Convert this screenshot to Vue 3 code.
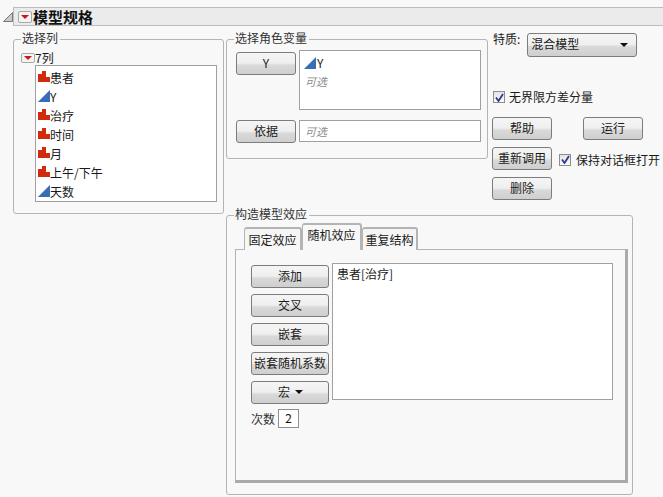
<script setup>
const columns = [
  { name: '患者', type: 'n' },
  { name: 'Y', type: 'c' },
  { name: '治疗', type: 'n' },
  { name: '时间', type: 'n' },
  { name: '月', type: 'n' },
  { name: '上午/下午', type: 'n' },
  { name: '天数', type: 'c' }
]
const tabs = [
  { name: '固定效应', cls: 'w58' },
  { name: '随机效应', cls: 'w60 active' },
  { name: '重复结构', cls: 'w56' }
]
const effects = ['添加', '交叉', '嵌套', '嵌套随机系数']
</script>

<template>
  <div class="page">
    <div class="head-row">
      <svg class="tri" width="10" height="10" viewBox="0 0 10 10">
        <path d="M0.5 9.5 L9.5 0.5 V9.5 Z" fill="#c9c9c9" stroke="#777" stroke-width="1" />
      </svg>
      <div class="head">
        <span class="menu big"><i></i></span>
        <span class="title">模型规格</span>
      </div>
    </div>

    <div class="content">
      <div class="group cols">
        <span class="legend">选择列</span>
        <div class="count"><span class="menu small"><i></i></span><span class="count-label">7列</span></div>
        <ul class="collist">
          <li v-for="c in columns" :key="c.name">
            <svg v-if="c.type === 'n'" class="ico" width="12" height="12" viewBox="0 0 12 12">
              <path d="M0 3h4v8H0zM4 0h4v11H4zM8 6h4v5H8z" fill="#d42a0c" />
              <path d="M3.800 4v7M7.800 7v4" stroke="#b8381f" stroke-width="0.5" />
            </svg>
            <svg v-else class="ico" width="12" height="12" viewBox="0 0 12 12">
              <path d="M0 12 L12 0 V12 Z" fill="#3a6db8" />
              <path d="M0 12 L12 0" stroke="#7fa0d0" stroke-width="0.7" />
            </svg>
            <span class="col-name">{{ c.name }}</span>
          </li>
        </ul>
      </div>

      <div class="main">
        <div class="top">
          <div class="group roles">
            <span class="legend">选择角色变量</span>
            <div class="role-row first">
              <button class="btn role-btn">Y</button>
              <div class="box tall">
                <div class="role-item">
                  <svg class="ico" width="12" height="12" viewBox="0 0 12 12">
                    <path d="M0 12 L12 0 V12 Z" fill="#3a6db8" />
                  </svg>
                  <span>Y</span>
                </div>
                <div class="opt">可选</div>
              </div>
            </div>
            <div class="role-row second">
              <button class="btn role-btn">依据</button>
              <div class="box short"><div class="opt">可选</div></div>
            </div>
          </div>

          <div class="side">
            <div class="trait">
              <span>特质:</span>
              <div class="select btn-bg"><span>混合模型</span><i class="caret"></i></div>
            </div>
            <label class="check unbounded"><span class="cb"><svg width="9" height="9" viewBox="0 0 9 9"><path d="M1 4.500 L3.500 8 L8 1" fill="none" stroke="#2f3a8f" stroke-width="1.800" /></svg></span>无界限方差分量</label>
            <div class="side-row r1">
              <button class="btn side-btn">帮助</button>
              <button class="btn side-btn run">运行</button>
            </div>
            <div class="side-row r2">
              <button class="btn side-btn">重新调用</button>
              <label class="check keep"><span class="cb"><svg width="9" height="9" viewBox="0 0 9 9"><path d="M1 4.500 L3.500 8 L8 1" fill="none" stroke="#2f3a8f" stroke-width="1.800" /></svg></span>保持对话框打开</label>
            </div>
            <div class="side-row r2">
              <button class="btn side-btn">删除</button>
            </div>
          </div>
        </div>

        <div class="group build">
          <span class="legend">构造模型效应</span>
          <div class="tabs">
            <div v-for="t in tabs" :key="t.name" class="tab" :class="t.cls">{{ t.name }}</div>
          </div>
          <div class="panel">
            <div class="effect-col">
              <button v-for="e in effects" :key="e" class="btn eff-btn">{{ e }}</button>
              <button class="btn eff-btn macro">宏<i class="caret"></i></button>
              <div class="degree"><span>次数</span><span class="num">2</span></div>
            </div>
            <div class="box effects">患者[治疗]</div>
          </div>
        </div>
      </div>
    </div>
  </div>
</template>

<style>
html, body { margin: 0; background: #f8f8f8; }
</style>

<style scoped>
.page {
  width: 663px;
  height: 497px;
  overflow: hidden;
  background: #f8f8f8;
  box-sizing: border-box;
  padding-top: 7px;
  font-family: "Noto Sans CJK SC", "Liberation Sans", sans-serif;
  font-size: 12px;
  color: #1a1a1a;
  line-height: 16px;
}
.head-row { display: flex; align-items: center; padding-left: 3px; }
.tri { flex: none; }
.head {
  flex: 1;
  height: 19px;
  display: flex;
  align-items: center;
  background: #ebebeb;
  border: 1px solid #bdbdbd;
  border-right: 0;
  padding-left: 4px;
  box-sizing: border-box;
}
.title { font-size: 15px; font-weight: 700; margin-left: 1px; color: #111; }
.menu {
  display: inline-flex;
  align-items: center;
  justify-content: center;
  box-sizing: border-box;
  border: 1px solid #a8a8a8;
  border-radius: 2px;
  background: #f4f4f4;
  flex: none;
}
.menu i {
  width: 0; height: 0;
  border-left: 4px solid transparent;
  border-right: 4px solid transparent;
  border-top: 4px solid #d01414;
}
.menu.big { width: 14px; height: 12px; }
.menu.small { width: 14px; height: 10px; }

.content { display: flex; padding-left: 13px; align-items: flex-start; }
.group {
  position: relative;
  box-sizing: border-box;
  border: 1px solid #b4b4b4;
  border-radius: 3px;
}
.legend {
  position: absolute;
  top: -10px;
  left: 7px;
  background: #f8f8f8;
  padding: 0 2px 0 1px;
  color: #333;
  white-space: nowrap;
}
.cols { width: 211px; height: 175px; margin-top: 13px; padding: 11px 0 0 7px; flex: none; }
.count { display: flex; align-items: center; height: 14px; }
.count-label { margin-top: -1px; }
.collist {
  list-style: none;
  margin: 0 0 0 14px;
  padding: 3px 0 0 2px;
  width: 182px;
  height: 137px;
  box-sizing: border-box;
  background: #fff;
  border: 1px solid #a0a0a0;
}
.collist li { height: 19px; display: flex; align-items: center; }
.col-name { margin-top: -1px; }
.ico { flex: none; margin-top: -4px; }

.main { margin-left: 2px; }
.top { display: flex; height: 189px; align-items: flex-start; }
.roles { width: 262px; height: 120px; margin-top: 13px; padding: 10px 0 0 9px; flex: none; }
.role-row { display: flex; gap: 3px; align-items: flex-start; }
.role-row.second { margin-top: 10px; }
.role-btn { width: 60px; height: 23px; margin-top: 2px; }
.role-row.second .role-btn { margin-top: 0; }
.box { background: #fff; border: 1px solid #a0a0a0; box-sizing: border-box; }
.tall { width: 182px; height: 60px; padding: 3px 0 0 4px; }
.short { width: 182px; height: 22px; padding: 2px 0 0 4px; }
.role-item { display: flex; align-items: center; height: 17px; gap: 1px; }
.role-item .ico { margin-top: 0; }
.opt { color: #8c8c8c; font-style: italic; margin-left: 1px; margin-top: 2px; font-size: 11px; }
.short .opt { margin-top: 0; }

.btn, .btn-bg {
  background: linear-gradient(#f5f5f5 0%, #efefef 48%, #d9d9d9 58%, #cfcfcf 100%);
}
.btn {
  box-sizing: border-box;
  border: 1px solid #7c7c7c;
  border-radius: 3px;
  padding: 0 0 2px;
  font: inherit;
  color: #1a1a1a;
  display: flex;
  align-items: center;
  justify-content: center;
  white-space: nowrap;
}
.side { margin-left: 4px; width: 170px; flex: none; }
.trait { display: flex; align-items: flex-start; padding: 7px 0 0 1px; height: 23px; }
.trait > span { margin-top: -2px; }
.select {
  box-sizing: border-box;
  width: 110px;
  height: 24px;
  margin-left: 7px;
  border: 1px solid #7c7c7c;
  border-radius: 3px;
  display: flex;
  align-items: center;
  justify-content: space-between;
  padding: 0 8px 2px 3px;
}
.caret {
  display: inline-block;
  width: 0; height: 0;
  border-left: 4px solid transparent;
  border-right: 4px solid transparent;
  border-top: 4px solid #111;
  margin-top: 1px;
}
.check { display: flex; align-items: center; white-space: nowrap; }
.cb {
  width: 12px; height: 12px;
  box-sizing: border-box;
  border: 1px solid #8e8e8e;
  background: linear-gradient(#e4e4e4, #fafafa);
  display: inline-flex;
  align-items: center;
  justify-content: center;
  flex: none;
}
.unbounded { margin: 33px 0 0 1px; gap: 4px; height: 16px; }
.side-row { display: flex; align-items: center; }
.r1 { margin-top: 12px; }
.r2 { margin-top: 7px; }
.side-btn { width: 60px; height: 23px; flex: none; }
.run { margin-left: 31px; }
.keep { margin-left: 7px; gap: 5px; margin-top: 2px; }

.build { width: 407px; height: 280px; padding: 8px 5px 0 8px; }
.tabs { display: flex; align-items: flex-end; height: 26px; margin-left: 9px; position: relative; z-index: 1; margin-bottom: -1px; }
.tab {
  box-sizing: border-box;
  height: 23px;
  border: 1px solid #b4b4b4;
  border-bottom: 0;
  border-radius: 3px 3px 0 0;
  background: linear-gradient(#f4f4f4, #f8f8f8);
  display: flex;
  align-items: center;
  justify-content: center;
  white-space: nowrap;
  border-top-width: 2px;
  border-right-width: 2px;
}
.w58 { width: 58px; padding-top: 1px; }
.w60 { width: 60px; }
.w56 { width: 56px; padding-top: 1px; }
.tab.active { height: 27px; padding-bottom: 6px; background: #f8f8f8; }
.panel {
  box-sizing: border-box;
  width: 393px;
  height: 234px;
  border: 1px solid #b4b4b4;
  border-right: 3px solid #aaa;
  border-bottom: 3px solid #aaa;
  display: flex;
  align-items: flex-start;
  padding: 13px 0 0 15px;
}
.effect-col { width: 78px; margin-top: 2px; flex: none; }
.eff-btn { width: 78px; height: 23px; margin-bottom: 6px; }
.macro { gap: 5px; margin-bottom: 0; padding-left: 1px; }
.degree { display: flex; align-items: center; margin-top: 5px; gap: 3px; height: 19px; color: #333; }
.num {
  width: 21px; height: 19px;
  box-sizing: border-box;
  border: 1px solid #8e8e8e;
  background: #fff;
  text-align: center;
  line-height: 16px;
  color: #111;
}
.effects { width: 281px; height: 137px; margin-left: 3px; padding: 2px 0 0 4px; }
</style>
